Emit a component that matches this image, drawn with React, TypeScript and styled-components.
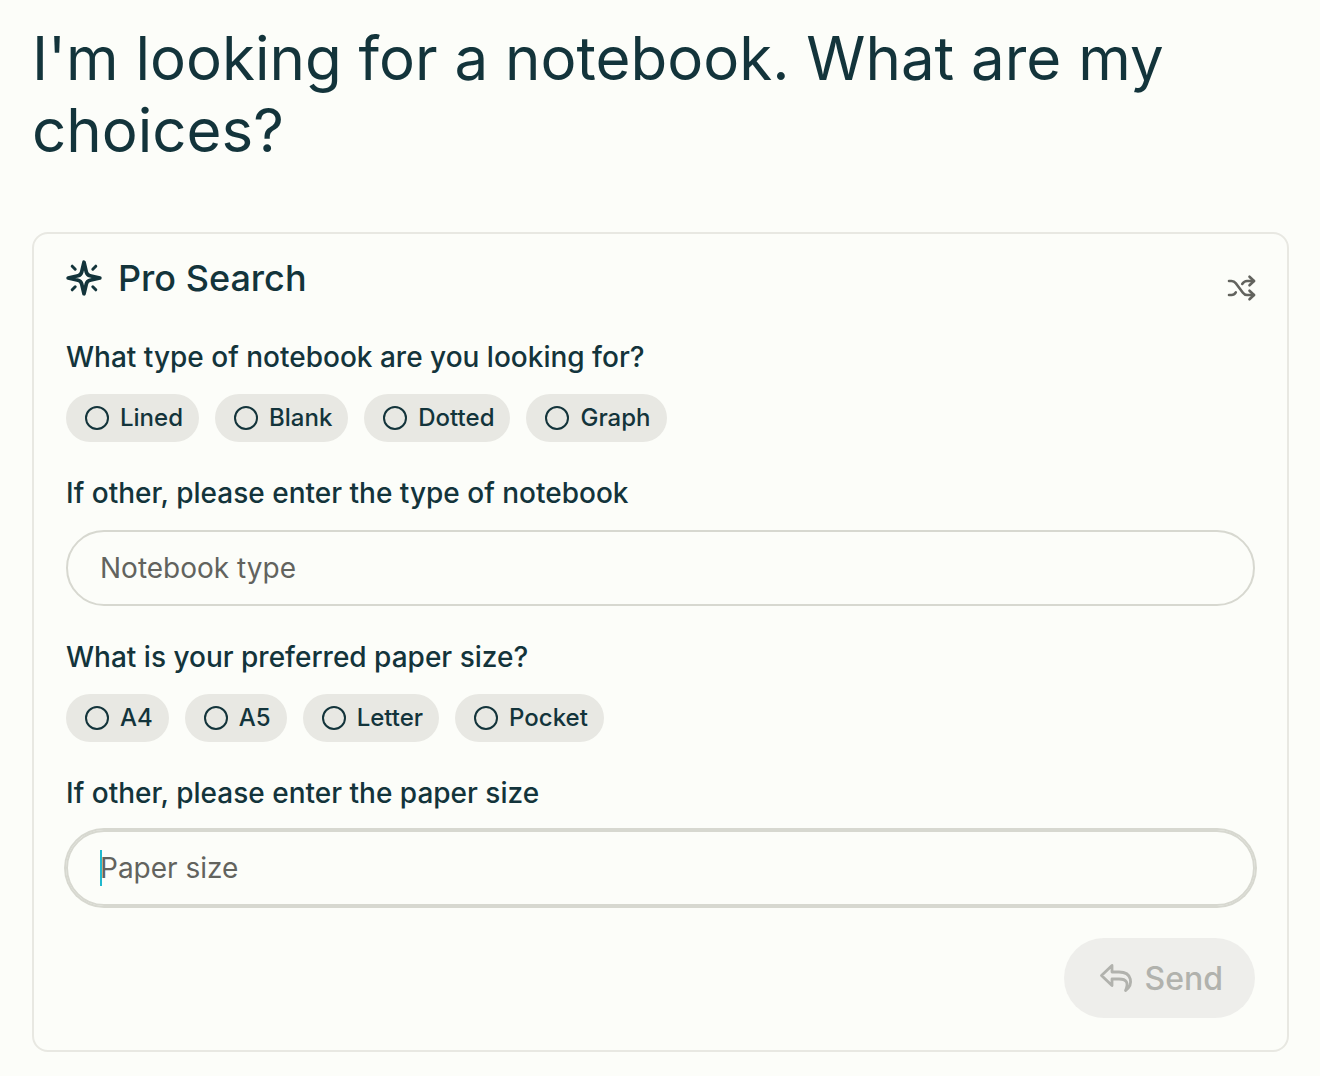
import React, { useState } from 'react';
import styled, { createGlobalStyle } from 'styled-components';

const ink = '#13343b';
const muted = '#62635e';

const GlobalStyle = createGlobalStyle`
  *, *::before, *::after { box-sizing: border-box; }
  body {
    margin: 0;
    background: #fcfdf9;
    color: ${ink};
    font-family: Inter, "Liberation Sans", sans-serif;
  }
  h1, h2, p, fieldset { margin: 0; padding: 0; border: 0; }
  button, input { font: inherit; color: inherit; }
`;

const Page = styled.main`
  padding: 22px 31px 24px 32px;
`;

const Title = styled.h1`
  font-size: 60px;
  font-weight: 400;
  line-height: 72px;
`;

const Card = styled.form`
  display: flex;
  flex-direction: column;
  margin-top: 66px;
  padding: 22px 32px 32px;
  border: 2px solid #e8e8e2;
  border-radius: 16px;
`;

const CardHeader = styled.header`
  display: flex;
  align-items: flex-start;
  justify-content: space-between;
  height: 50px;
`;

const Heading = styled.h2`
  display: flex;
  align-items: center;
  gap: 16px;
  font-size: 36px;
  font-weight: 500;
  line-height: 44px;
`;

const IconButton = styled.button`
  display: flex;
  padding: 16px 0 0;
  border: 0;
  background: none;
  color: ${muted};
  cursor: pointer;
`;

const Question = styled.fieldset`
  min-width: 0;
  margin-top: 32px;
`;

const Legend = styled.legend`
  padding: 0;
  font-size: 28px;
  font-weight: 500;
  line-height: 38px;
`;

const Chips = styled.div`
  display: flex;
  flex-wrap: wrap;
  gap: 16px;
  margin-top: 18px;
`;

const Chip = styled.label`
  display: flex;
  align-items: center;
  gap: 11px;
  height: 48px;
  padding: 0 16px 0 19px;
  border-radius: 24px;
  background: #e8e8e3;
  font-size: 24px;
  font-weight: 500;
  line-height: 32px;
  cursor: pointer;
`;

const Radio = styled.input`
  appearance: none;
  width: 24px;
  height: 24px;
  margin: 0;
  border: 2px solid ${ink};
  border-radius: 50%;
  &:checked { background: ${ink}; box-shadow: inset 0 0 0 4px #e8e8e3; }
`;

const Field = styled.div`
  display: flex;
  flex-direction: column;
  margin-top: 32px;
`;

const FieldLabel = styled.label`
  font-size: 28px;
  font-weight: 500;
  line-height: 38px;
`;

const InputWrap = styled.div`
  position: relative;
  margin-top: 18px;
`;

const TextInput = styled.input<{ $ownCaret: boolean }>`
  display: block;
  width: 100%;
  height: 76px;
  padding: 0 32px;
  border: 2px solid #d7d8d0;
  border-radius: 38px;
  outline: none;
  background: transparent;
  font-size: 28px;
  line-height: 36px;
  caret-color: ${(p) => (p.$ownCaret ? 'transparent' : '#20b8cd')};
  &::placeholder { color: ${muted}; opacity: 1; }
  &:focus { box-shadow: 0 0 0 2px #d7d8d0; }
`;

const Caret = styled.span`
  position: absolute;
  left: 34px;
  top: 20px;
  width: 2px;
  height: 36px;
  background: #20b8cd;
  pointer-events: none;
`;

const SendButton = styled.button`
  display: flex;
  align-items: center;
  align-self: flex-end;
  gap: 11px;
  height: 80px;
  margin-top: 32px;
  padding: 0 32px 0 34px;
  border: 0;
  border-radius: 40px;
  background: #eeeeeb;
  color: #b1b2ad;
  font-size: 32px;
  font-weight: 500;
`;

const SparkleIcon = () => (
  <svg width="36" height="36" viewBox="0 0 36 36" fill="none" stroke="currentColor" strokeWidth="3.7" strokeLinecap="round" strokeLinejoin="round" aria-hidden="true">
    <path d="M18 2.2L20.3 12Q21 15 24 15.700L33.800 18L24 20.300Q21 21 20.300 24L18 33.800L15.700 24Q15 21 12 20.300L2.200 18L12 15.700Q15 15 15.700 12Z" />
    <path d="M6.200 6.200l3 3M29.800 6.200l-3 3M6.200 29.800l3-3M29.800 29.800l-3-3" strokeWidth="3" />
  </svg>
);

const ShuffleIcon = () => (
  <svg width="30" height="32" viewBox="0 0 30 32" fill="none" stroke="currentColor" strokeWidth="2.6" strokeLinecap="round" strokeLinejoin="round" overflow="visible" aria-hidden="true">
    <path d="M4 9H6.5C8.5 9 9.7 9.8 10.8 11.3L17.9 20.7C19 22.2 20 23 22 23H29" />
    <path d="M4 23H6.5C8.5 23 9.7 22.2 10.8 20.4" />
    <path d="M17.2 12C18.6 9.9 20 9 22 9H29" />
    <path d="M24.5 4.7L29 9L24.5 13.3M24.5 18.7L29 23L24.5 27.3" />
  </svg>
);

const ReplyIcon = () => (
  <svg width="36" height="36" viewBox="0 0 36 36" fill="none" stroke="currentColor" strokeWidth="2.8" strokeLinecap="round" strokeLinejoin="round" aria-hidden="true">
    <path d="M14 5.5L3.5 15.5L14 25.5V19H21C28.5 19 31 22.5 27.5 30.5C35.5 25 34.5 12 21 12H14Z" />
  </svg>
);

type ChoiceProps = { name: string; title: string; options: string[] };

const Choice = ({ name, title, options }: ChoiceProps) => (
  <Question>
    <Legend>{title}</Legend>
    <Chips>
      {options.map((option) => (
        <Chip key={option}>
          <Radio type="radio" name={name} value={option} />
          {option}
        </Chip>
      ))}
    </Chips>
  </Question>
);

type TextFieldProps = { id: string; label: string; placeholder: string; autoFocus?: boolean };

const TextField = ({ id, label, placeholder, autoFocus = false }: TextFieldProps) => {
  const [value, setValue] = useState('');
  const [focused, setFocused] = useState(autoFocus);
  const ownCaret = focused && value === '';
  return (
    <Field>
      <FieldLabel htmlFor={id}>{label}</FieldLabel>
      <InputWrap>
        <TextInput
          id={id}
          type="text"
          placeholder={placeholder}
          value={value}
          autoFocus={autoFocus}
          $ownCaret={ownCaret}
          onChange={(e) => setValue(e.target.value)}
          onFocus={() => setFocused(true)}
          onBlur={() => setFocused(false)}
        />
        {ownCaret && <Caret />}
      </InputWrap>
    </Field>
  );
};

export default function App() {
  return (
    <>
      <GlobalStyle />
      <Page>
        <Title>I'm looking for a notebook. What are my choices?</Title>
        <Card onSubmit={(e) => e.preventDefault()}>
          <CardHeader>
            <Heading>
              <SparkleIcon />
              Pro Search
            </Heading>
            <IconButton type="button" aria-label="Skip">
              <ShuffleIcon />
            </IconButton>
          </CardHeader>
          <Choice name="type" title="What type of notebook are you looking for?" options={['Lined', 'Blank', 'Dotted', 'Graph']} />
          <TextField id="other-type" label="If other, please enter the type of notebook" placeholder="Notebook type" />
          <Choice name="size" title="What is your preferred paper size?" options={['A4', 'A5', 'Letter', 'Pocket']} />
          <TextField id="other-size" label="If other, please enter the paper size" placeholder="Paper size" autoFocus />
          <SendButton type="submit" disabled>
            <ReplyIcon />
            Send
          </SendButton>
        </Card>
      </Page>
    </>
  );
}
